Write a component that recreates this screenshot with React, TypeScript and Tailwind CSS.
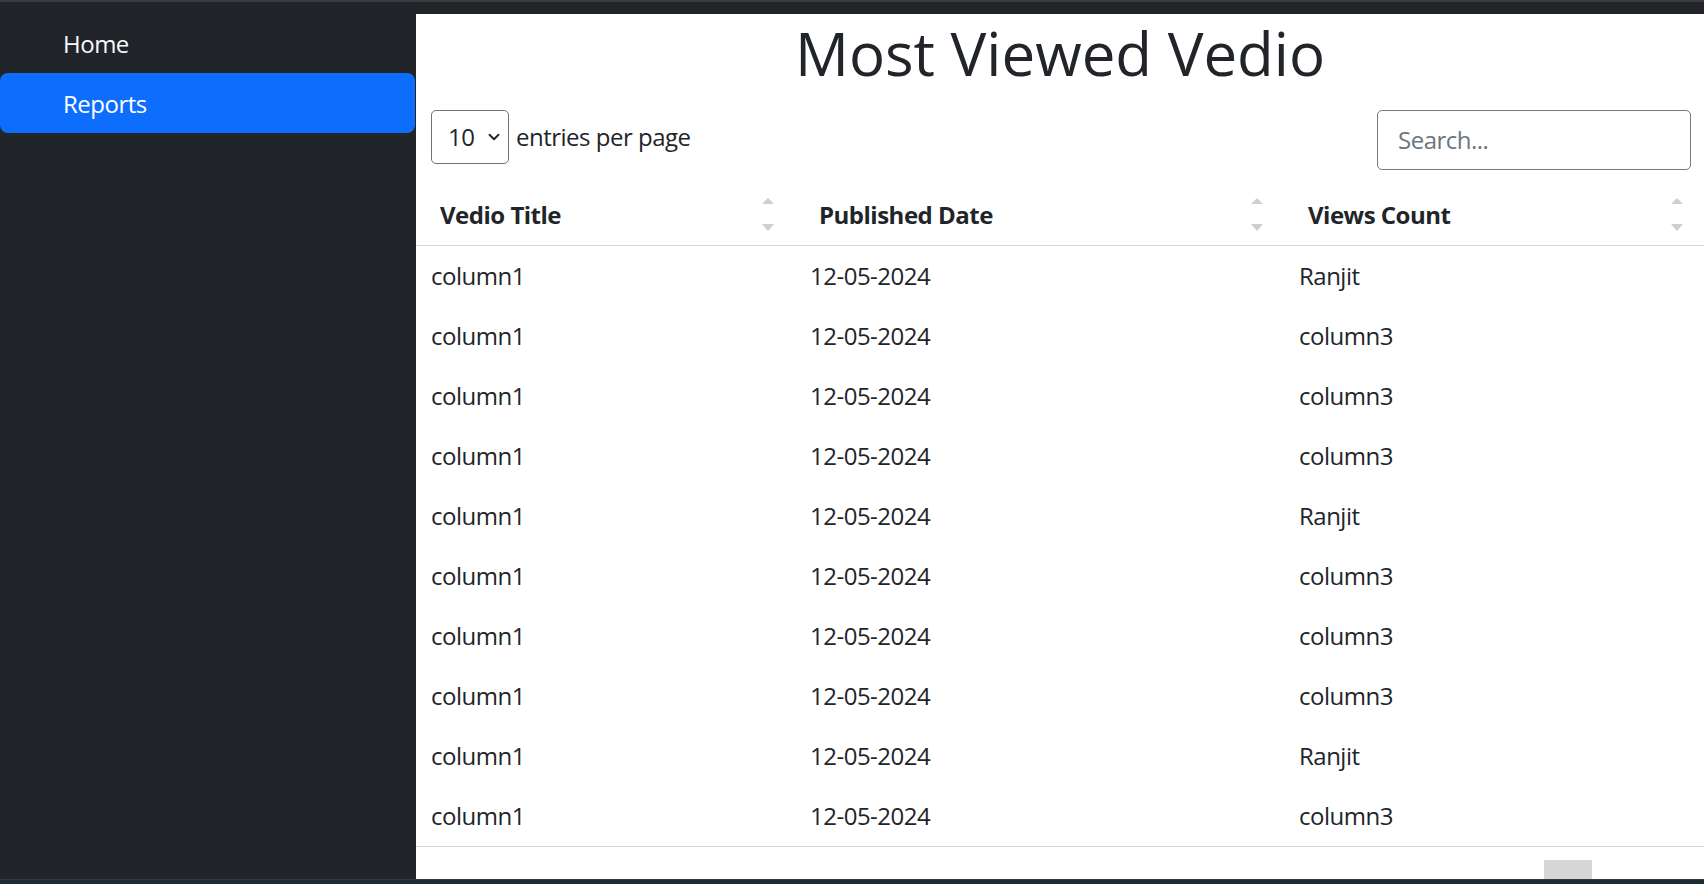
import { ChevronDown } from 'lucide-react'

const rows = [
  { title: 'column1', date: '12-05-2024', views: 'Ranjit' },
  { title: 'column1', date: '12-05-2024', views: 'column3' },
  { title: 'column1', date: '12-05-2024', views: 'column3' },
  { title: 'column1', date: '12-05-2024', views: 'column3' },
  { title: 'column1', date: '12-05-2024', views: 'Ranjit' },
  { title: 'column1', date: '12-05-2024', views: 'column3' },
  { title: 'column1', date: '12-05-2024', views: 'column3' },
  { title: 'column1', date: '12-05-2024', views: 'column3' },
  { title: 'column1', date: '12-05-2024', views: 'Ranjit' },
  { title: 'column1', date: '12-05-2024', views: 'column3' },
]

const columns = ['Vedio Title', 'Published Date', 'Views Count']

const SortArrows = () => (
  <svg width="12" height="34" viewBox="0 0 12 34" className="shrink-0">
    <path d="M0 6 L6 0 L12 6 Z" fill="#cfcfcf" />
    <path d="M0 26 L12 26 L6 33 Z" fill="#cfcfcf" />
  </svg>
)

const Sidebar = () => {
  return (
    <div className="w-[416px] shrink-0 pt-[12px]">
      <div className="h-[59px] flex items-center pl-[63px] text-[24px] text-[#f8f9fa]">Home</div>
      <div className="h-[60px] mr-[1px] flex items-center pl-[63px] pt-[1px] text-[24px] text-white bg-[#0d6efd] rounded-[8px]">
        Reports
      </div>
    </div>
  )
}

const App = () => {
  return (
    <div
      className="w-[1704px] h-[884px] flex flex-col overflow-hidden bg-[#212529] text-[#212529] tracking-[-0.5px]"
      style={{ fontFamily: '"Open Sans", "Noto Sans", sans-serif' }}
    >
      <div className="h-[2px] bg-[#3b3b3b]"></div>
      <div className="flex-1 flex min-h-0">
        <Sidebar />
        <div className="flex-1 mt-[12px] bg-white">
          <h1 className="pt-[1px] text-center text-[60px] leading-[76px] font-medium tracking-normal">
            Most Viewed Vedio
          </h1>

          <div className="mt-[19px] flex justify-between items-start pl-[15px] pr-[13px]">
            <div className="flex items-center gap-[7px] h-[54px]">
              <div className="w-[78px] h-[54px] border border-[#6c757d] rounded-[5px] flex items-center pl-[16px] pr-[5px] justify-between text-[24px]">
                <span>10</span>
                <ChevronDown size={18} strokeWidth={2.5} className="text-[#212529]" />
              </div>
              <span className="text-[24px]">entries per page</span>
            </div>
            <div className="w-[314px] h-[60px] border border-[#7a7a7a] rounded-[5px] flex items-center pl-[20px] text-[24px] text-[#6c757d]">
              Search...
            </div>
          </div>

          <div className="mt-[15px]">
            <div className="grid grid-cols-[379px_489px_1fr] h-[61px] border-b border-[#d8d8d8]">
              {columns.map((c) => (
                <div key={c} className="flex items-center justify-between pl-[24px] pr-[21px]">
                  <span className="text-[24px] font-bold">{c}</span>
                  <SortArrows />
                </div>
              ))}
            </div>
            <div className="border-b border-[#d8d8d8]">
              {rows.map((r, i) => (
                <div key={i} className="grid grid-cols-[379px_489px_1fr] h-[60px] items-center text-[24px]">
                  <div className="pl-[15px]">{r.title}</div>
                  <div className="pl-[15px]">{r.date}</div>
                  <div className="pl-[15px]">{r.views}</div>
                </div>
              ))}
            </div>
            <div className="flex justify-end pt-[13px] pr-[112px]">
              <div className="w-[48px] h-[19px] bg-[#d6d6d6]"></div>
            </div>
          </div>
        </div>
      </div>
      <div className="h-[5px] bg-[#1c2b31] border-t border-[#2b3b41]"></div>
    </div>
  )
}

export default App
